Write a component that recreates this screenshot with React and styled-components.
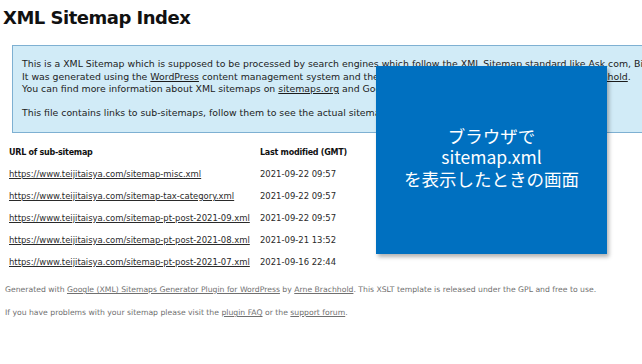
import React from 'react';
import styled, { createGlobalStyle } from 'styled-components';

const sitemaps = [
  { url: 'https://www.teijitaisya.com/sitemap-misc.xml', modified: '2021-09-22 09:57' },
  { url: 'https://www.teijitaisya.com/sitemap-tax-category.xml', modified: '2021-09-22 09:57' },
  { url: 'https://www.teijitaisya.com/sitemap-pt-post-2021-09.xml', modified: '2021-09-22 09:57' },
  { url: 'https://www.teijitaisya.com/sitemap-pt-post-2021-08.xml', modified: '2021-09-21 13:52' },
  { url: 'https://www.teijitaisya.com/sitemap-pt-post-2021-07.xml', modified: '2021-09-16 22:44' },
];

const App = () => {
  return (
    <>
      <GlobalStyle />
      <Page>
        <Title>XML Sitemap Index</Title>
        <Intro>
          <IntroText>
            <Line>This is a XML Sitemap which is supposed to be processed by search engines which follow the XML Sitemap standard like Ask.com, Bing, Google and Yahoo.</Line>
            <Line>It was generated using the <a href="#">WordPress</a> content management system and the <a href="#">Google Sitemap Generator Plugin</a> by <a href="#">Arne Brachhold</a>.</Line>
            <Line>You can find more information about XML sitemaps on <a href="#">sitemaps.org</a> and Google's <a href="#">list of sitemap programs</a>.</Line>
          </IntroText>
          <IntroText>
            <Line>This file contains links to sub-sitemaps, follow them to see the actual sitemap content.</Line>
          </IntroText>
        </Intro>

        <SitemapTable>
          <HeadCell>URL of sub-sitemap</HeadCell>
          <HeadCell>Last modified (GMT)</HeadCell>
          {sitemaps.map(s => (
            <React.Fragment key={s.url}>
              <UrlCell><a href="#">{s.url}</a></UrlCell>
              <DateCell>{s.modified}</DateCell>
            </React.Fragment>
          ))}
        </SitemapTable>

        <Footer>
          <FootLine>
            Generated with <a href="#">Google (XML) Sitemaps Generator Plugin for WordPress</a> by <a href="#">Arne Brachhold</a>. This XSLT template is released under the GPL and free to use.
          </FootLine>
          <FootLine>
            If you have problems with your sitemap please visit the <a href="#">plugin FAQ</a> or the <a href="#">support forum</a>.
          </FootLine>
        </Footer>

        <Callout>
          <CalloutText>
            <span>ブラウザで</span>
            <span>sitemap.xml</span>
            <span>を表示したときの画面</span>
          </CalloutText>
        </Callout>
      </Page>
    </>
  );
};

export default App;

const GlobalStyle = createGlobalStyle`
  html, body {
    margin: 0;
    padding: 0;
    background: #fff;
    overflow: hidden;
  }
  body {
    font-family: "DejaVu Sans", Verdana, sans-serif;
    color: #1a1a1a;
  }
`;

const Page = styled.div`
  position: relative;
  width: 642px;
  height: 364px;
  overflow: hidden;
  padding-top: 7px;
  box-sizing: border-box;
`;

const Title = styled.h1`
  margin: 0 0 16px 3px;
  font-size: 18px;
  line-height: 22px;
  font-weight: bold;
  letter-spacing: -0.5px;
  color: #111;
`;

const Intro = styled.div`
  margin-left: 12px;
  width: 900px;
  padding: 12px 9px 13px;
  background: #d1ebf7;
  border: 1px solid #7eb0d2;
  display: flex;
  flex-direction: column;
  gap: 11px;
`;

const IntroText = styled.div`
  display: flex;
  flex-direction: column;
  font-size: 9.35px;
  line-height: 12.5px;
  color: #1c1c1c;
  a {
    color: #1c1c1c;
  }
`;

const Line = styled.span`
  white-space: nowrap;
`;

const SitemapTable = styled.div`
  display: grid;
  grid-template-columns: 251px auto;
  grid-template-rows: 21px repeat(5, 22px);
  align-items: center;
  margin: 9px 0 0 9px;
  font-size: 8.45px;
`;

const HeadCell = styled.div`
  font-size: 8px;
  font-weight: bold;
  letter-spacing: -0.25px;
  color: #111;
`;

const UrlCell = styled.div`
  white-space: nowrap;
  a {
    color: #2a2a2a;
  }
`;

const DateCell = styled.div`
  color: #2a2a2a;
  white-space: nowrap;
`;

const Footer = styled.div`
  margin: 11px 0 0 5px;
  display: flex;
  flex-direction: column;
  gap: 11px;
`;

const FootLine = styled.p`
  margin: 0;
  font-size: 7.7px;
  line-height: 12px;
  color: #707070;
  white-space: nowrap;
  a {
    color: #707070;
  }
`;

const Callout = styled.div`
  position: absolute;
  left: 376px;
  top: 66px;
  width: 231px;
  height: 188px;
  background: #0070c0;
  box-shadow: 2px 3px 4px rgba(0, 0, 0, 0.3);
  display: flex;
  align-items: center;
  justify-content: center;
  padding-bottom: 6px;
  box-sizing: border-box;
`;

const CalloutText = styled.div`
  display: flex;
  flex-direction: column;
  align-items: center;
  color: #fff;
  font-family: "Noto Sans CJK JP", "Noto Sans", sans-serif;
  font-size: 17.5px;
  line-height: 21.5px;
`;
